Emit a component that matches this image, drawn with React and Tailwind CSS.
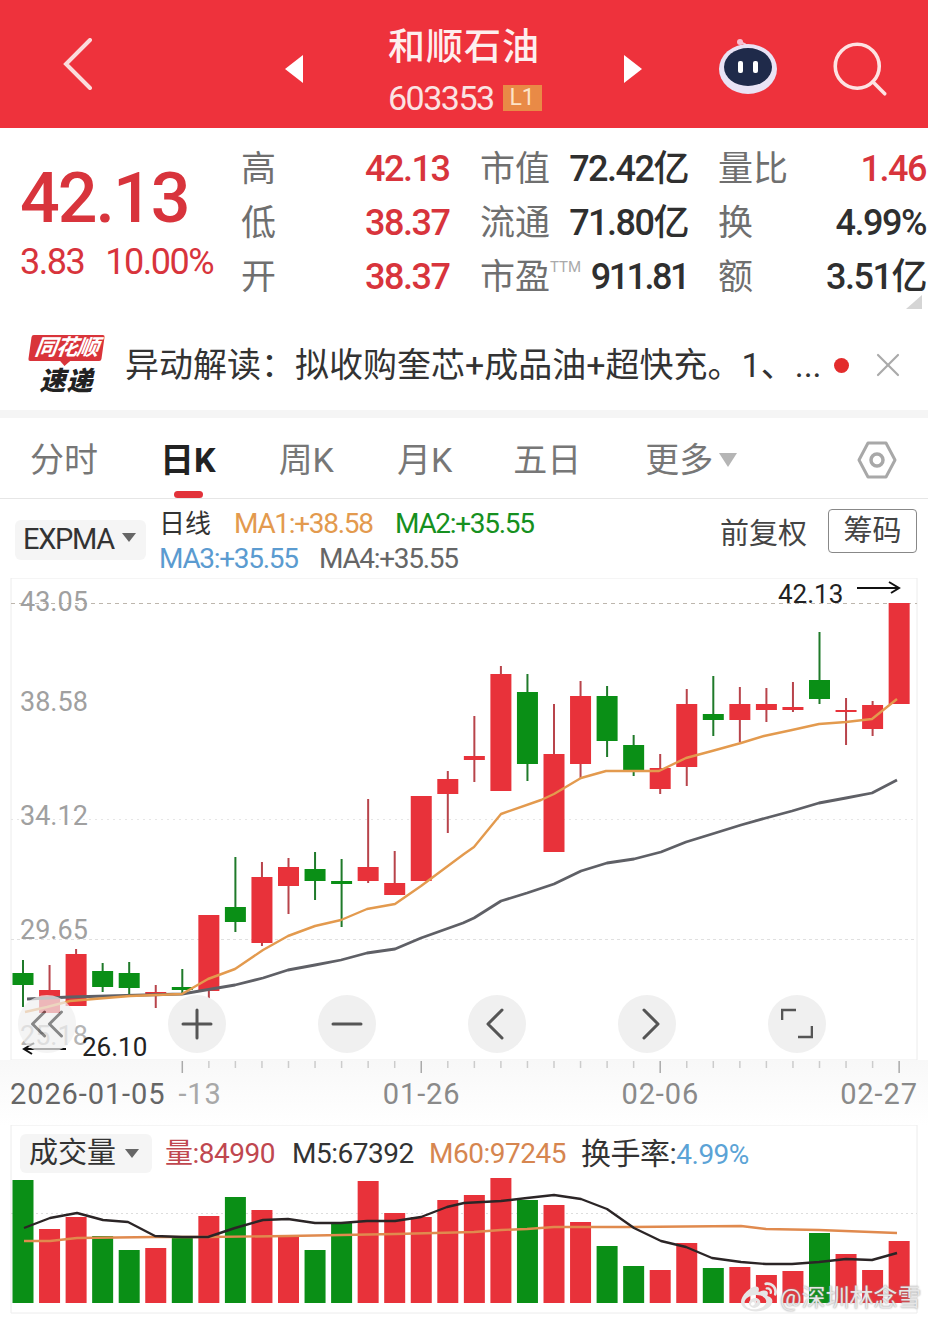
import { ChevronLeft, Search, Plus, Minus, ChevronRight, ChevronsLeft, X } from 'lucide-react'
import { FaWeibo } from 'react-icons/fa'

const UP = '#e8323a'
const DOWN = '#0a8f16'
const font = { fontFamily: 'Roboto, "Noto Sans CJK SC", sans-serif' }

const newsText = '异动解读\uFF1A拟收购奎芯+成品油+超快充。1、...'

// color, wick top, wick bottom, body top, body bottom
const candles = [
  ['d', 960, 1007, 973, 985], ['u', 965, 1013, 990, 1013], ['u', 949, 1006, 954, 1006],
  ['d', 963, 992, 971, 987], ['d', 962, 997, 973, 988], ['u', 985, 1008, 992, 995],
  ['d', 969, 994, 987, 990], ['u', 915, 1006, 915, 991], ['d', 857, 932, 907, 922],
  ['u', 862, 946, 877, 943], ['u', 858, 914, 867, 886], ['d', 852, 900, 869, 881],
  ['d', 859, 927, 881, 884], ['u', 799, 883, 867, 881], ['u', 851, 894, 883, 895],
  ['u', 796, 881, 796, 881], ['u', 771, 833, 779, 794], ['u', 716, 782, 756, 760],
  ['u', 666, 791, 674, 791], ['d', 674, 781, 692, 764], ['u', 704, 852, 754, 852],
  ['u', 681, 779, 696, 764], ['d', 686, 757, 696, 741], ['d', 735, 776, 745, 770],
  ['u', 754, 794, 768, 789], ['u', 689, 786, 704, 767], ['d', 676, 736, 714, 720],
  ['u', 687, 742, 704, 720], ['u', 688, 722, 704, 710], ['u', 682, 712, 707, 710],
  ['d', 632, 704, 680, 699], ['u', 698, 745, 710, 712], ['u', 701, 736, 705, 729],
  ['u', 603, 704, 603, 704],
]

const volumes = [
  ['d', 1180], ['u', 1229], ['u', 1217], ['d', 1236], ['d', 1250], ['u', 1248], ['d', 1238],
  ['u', 1216], ['d', 1197], ['u', 1210], ['u', 1237], ['d', 1250], ['d', 1223], ['u', 1181],
  ['u', 1213], ['u', 1217], ['u', 1200], ['u', 1195], ['u', 1178], ['d', 1200], ['u', 1205],
  ['u', 1222], ['d', 1246], ['d', 1266], ['u', 1270], ['u', 1243], ['d', 1268], ['u', 1267],
  ['u', 1275], ['u', 1271], ['d', 1233], ['u', 1254], ['u', 1270], ['u', 1241],
]

const maOrange = '25,1012 47,1007 70,1001 130,996 182,994 208,979 235,969 263,950 288,936 315,926 341,920 367,909 395,904 421,886 464,854 474,847 501,814 541,800 554,794 581,778 606,771 659,771 686,758 712,751 741,743 764,736 792,730 819,724 846,722 872,719 897,699'
const maGray = '27,999 70,997 182,994 235,985 263,978 288,970 315,965 341,960 367,953 395,949 421,938 463,923 474,918 501,901 527,893 554,884 581,871 607,863 634,859 661,852 686,842 712,834 741,825 766,818 792,811 819,803 846,798 872,793 897,780'
const volBlack = '24,1228 50,1218 77,1213 103,1220 128,1222 155,1236 182,1237 208,1237 235,1228 263,1220 288,1219 315,1223 341,1223 367,1221 395,1221 421,1217 447,1207 464,1203 501,1201 527,1198 554,1195 581,1199 607,1209 634,1228 661,1241 686,1247 712,1258 741,1262 766,1264 792,1264 819,1262 846,1259 872,1260 897,1253'
const volOrange = '24,1241 50,1241 77,1238 155,1237 208,1237 288,1236 395,1234 474,1232 501,1230 527,1229 554,1227 631,1227 741,1226 766,1229 819,1230 897,1233'

const cx = i => 23 + i * 26.55

function PriceChart() {
  return (
    <svg viewBox="0 578 928 482" className="absolute inset-0 h-full w-full">
      <path d="M11 1060V578H917V1060H11" fill="none" stroke="#ececec" strokeWidth="1" />
      <line x1="11" x2="917" y1="603.5" y2="603.5" stroke="#bdb6ad" strokeDasharray="4 4" />
      <line x1="11" x2="917" y1="819.5" y2="819.5" stroke="#e6e6e6" strokeDasharray="2 4" />
      <line x1="11" x2="917" y1="939.5" y2="939.5" stroke="#e0e0e0" strokeDasharray="3 3" />
      {candles.map(([c, wt, wb, bt, bb], i) => {
        const color = c === 'u' ? UP : DOWN
        return (
          <g key={i}>
            <rect x={cx(i) - 1} y={wt} width="2" height={wb - wt} fill={c === 'u' ? '#b8444b' : '#1f7a2a'} />
            <rect x={cx(i) - 10.5} y={bt} width="21" height={bb - bt} fill={color} />
          </g>
        )
      })}
      <polyline points={maGray} fill="none" stroke="#5f6066" strokeWidth="2.8" strokeLinejoin="round" />
      <polyline points={maOrange} fill="none" stroke="#e39a4e" strokeWidth="2.4" strokeLinejoin="round" />
    </svg>
  )
}

function VolumeChart() {
  return (
    <svg viewBox="0 1125 928 195" className="absolute inset-0 h-full w-full">
      <path d="M11 1313V1125H917V1313H11" fill="none" stroke="#ececec" strokeWidth="1" />
      <line x1="11" x2="917" y1="1213.5" y2="1213.5" stroke="#dddddd" strokeDasharray="2 3" />
      {volumes.map(([c, top], i) => (
        <rect key={i} x={cx(i) - 10.5} y={top} width="21" height={1303 - top} fill={c === 'u' ? UP : DOWN} />
      ))}
      <polyline points={volOrange} fill="none" stroke="#e08a4e" strokeWidth="2.4" strokeLinejoin="round" />
      <polyline points={volBlack} fill="none" stroke="#2b2526" strokeWidth="2.4" strokeLinejoin="round" />
    </svg>
  )
}

function Robot() {
  return (
    <svg viewBox="0 0 60 60" className="h-[60px] w-[60px]">
      <path d="M30 13C29 7 25 8 23 6" fill="none" stroke="#f4c6d6" strokeWidth="2" />
      <circle cx="22" cy="6" r="3" fill="#f7bfd2" />
      <ellipse cx="30" cy="33" rx="29" ry="25" fill="#e9e3f5" />
      <ellipse cx="30" cy="31" rx="24" ry="19" fill="#1f2a4a" />
      <rect x="20" y="25" width="5" height="12" rx="2" fill="#fff" />
      <rect x="35" y="25" width="5" height="12" rx="2" fill="#fff" />
    </svg>
  )
}

function StatRow({ label, value, name, amount, name2, amount2, amountClass, tag }) {
  return (
    <div className="flex h-[54px] items-center whitespace-nowrap text-[#6f6f6f]">
      <span className="w-[124px] text-[35px] leading-none">{label}</span>
      <span className="w-[84px] text-right text-[36px] font-medium leading-none tracking-[-1.5px] text-[#d8343c]">{value}</span>
      <span className="ml-[31px] flex w-[88px] items-start text-[35px] leading-none">
        {name}
        {tag && <sup className="mt-[8px] text-[15px] leading-none text-[#aaaaaa]">{tag}</sup>}
      </span>
      <span className={`w-[120px] text-right text-[36px] font-medium leading-none text-[#2f2f2f] ${tag ? 'tracking-[-2.5px]' : 'tracking-[-1.5px]'}`}>{amount}</span>
      <span className="ml-[30px] w-[70px] text-[35px] leading-none">{name2}</span>
      <span className={`w-[138px] text-right text-[36px] font-medium leading-none tracking-[-1.5px] ${amountClass}`}>{amount2}</span>
    </div>
  )
}

function Tab({ label, active, className }) {
  return (
    <span className={`text-[34px] leading-none ${active ? 'font-bold text-[#222222]' : 'text-[#777777]'} ${className}`}>
      {label}
    </span>
  )
}

function RoundButton({ children, className = '' }) {
  return (
    <div className={`flex h-[58px] w-[58px] items-center justify-center rounded-full bg-[#f0f0f0] text-[#555555] ${className}`}>
      {children}
    </div>
  )
}

function Ticks() {
  return (
    <svg viewBox="0 1060 928 14" className="absolute left-0 top-0 h-[14px] w-full">
      {candles.map((_, i) => {
        if (i < 6) return null
        const major = i === 6 || i === 15 || i === 24 || i === 33
        return <rect key={i} x={cx(i) - 0.75} y="1061" width="1.5" height={major ? 12 : 7} fill={major ? '#aaaaaa' : '#cccccc'} />
      })}
    </svg>
  )
}

export default function App() {
  return (
    <div className="h-[1320px] w-[928px] overflow-hidden bg-white" style={font}>
      {/* header */}
      <div className="relative flex h-[128px] items-center bg-[#ee323c] pt-[12px] text-white">
        <svg viewBox="0 0 30 52" className="ml-[63px] mt-[-12px] h-[52px] w-[30px]" fill="none" stroke="#fbdcdc" strokeWidth="4" strokeLinecap="round">
          <path d="M27 2L3 26L27 50" />
        </svg>
        <div className="ml-[192px] mt-[-3px] h-0 w-0 border-y-[14px] border-r-[18px] border-y-transparent border-r-white" />
        <div className="ml-[85px] flex w-[152px] flex-col items-start">
          <span className="text-[37px] font-medium leading-[44px] tracking-[1px] text-[#fdeeee]">和顺石油</span>
          <div className="mt-[11px] flex items-center">
            <span className="text-[34px] leading-[34px] tracking-[-1.5px] text-[#fbe3e3]">603353</span>
            <span className="ml-[9px] flex h-[26px] w-[39px] items-center justify-center bg-[#e98a46] text-[23px] leading-none text-[#fde3c8]">L1</span>
          </div>
        </div>
        <div className="ml-[84px] mt-[-3px] h-0 w-0 border-y-[14px] border-l-[18px] border-y-transparent border-l-white" />
        <div className="ml-[76px] mt-[-8px]"><Robot /></div>
        <Search className="ml-[49px] mt-[-3px] h-[66px] w-[66px]" strokeWidth={1.3} color="#fde3e3" />
      </div>

      {/* quote */}
      <div className="flex h-[202px] pt-[14px]">
        <div className="w-[241px] shrink-0 pl-[20px] pt-[21px] text-[#d8343c]">
          <div className="text-[70px] font-medium leading-[70px] tracking-[-2px]">42.13</div>
          <div className="mt-[11px] flex text-[36px] leading-none tracking-[-1.5px]">
            <span>3.83</span>
            <span className="ml-[21px]">10.00%</span>
          </div>
        </div>
        <div className="relative w-[687px]">
          <StatRow label="高" value="42.13" name="市值" amount="72.42亿" name2="量比" amount2="1.46" amountClass="text-[#d8343c]" />
          <StatRow label="低" value="38.37" name="流通" amount="71.80亿" name2="换" amount2="4.99%" amountClass="text-[#2f2f2f]" />
          <StatRow label="开" value="38.37" name="市盈" tag="TTM" amount="911.81" name2="额" amount2="3.51亿" amountClass="text-[#2f2f2f]" />
          <div className="absolute right-[6px] top-[153px] h-0 w-0 border-b-[14px] border-l-[16px] border-b-[#d5d5d5] border-l-transparent" />
        </div>
      </div>

      {/* news */}
      <div className="flex h-[80px] items-center pb-[10px]">
        <div className="ml-[30px] flex w-[73px] shrink-0 flex-col items-center">
          <div className="relative flex h-[26px] w-[73px] skew-x-[-8deg] items-center justify-center rounded-[2px] bg-[#d9343a] text-[22px] font-bold italic leading-none tracking-[-1px] text-white">
            同花顺
            <div className="absolute left-[32px] top-[26px] h-0 w-0 border-x-[5px] border-t-[5px] border-x-transparent border-t-[#d9343a]" />
          </div>
          <div className="mt-[6px] text-[26px] font-black italic leading-[28px] tracking-[1px] text-[#222222]">速递</div>
        </div>
        <div className="ml-[22px] w-[707px] shrink-0 whitespace-nowrap text-[34px] leading-none text-[#333333]">{newsText}</div>
        <div className="ml-[2px] h-[15px] w-[15px] shrink-0 rounded-full bg-[#e32c2c]" />
        <X className="ml-[19px] h-[40px] w-[40px] shrink-0" strokeWidth={1.3} color="#aaaaaa" />
      </div>
      <div className="h-[8px] bg-[#f5f5f5]" />

      {/* tabs */}
      <div className="relative flex h-[81px] items-center border-b border-[#e6e6e6] pt-[3px]">
        <Tab label="分时" className="ml-[30px]" />
        <Tab label="日K" active className="ml-[62px]" />
        <Tab label="周K" className="ml-[63px]" />
        <Tab label="月K" className="ml-[63px]" />
        <Tab label="五日" className="ml-[61px]" />
        <Tab label="更多" className="ml-[64px]" />
        <div className="ml-[6px] h-0 w-0 border-x-[9px] border-t-[14px] border-x-transparent border-t-[#b5b5b5]" />
        <svg viewBox="0 0 40 40" className="ml-[120px] h-[40px] w-[40px]" fill="none" stroke="#a8a8a8">
          <path d="M11 3H29L38 20L29 37H11L2 20Z" strokeWidth="3" strokeLinejoin="round" />
          <circle cx="20" cy="20" r="6" strokeWidth="3.5" />
        </svg>
        <div className="absolute bottom-0 left-[174px] h-[7px] w-[29px] rounded-full bg-[#e2323a]" />
      </div>

      {/* indicator row */}
      <div className="flex h-[79px] items-center whitespace-nowrap text-[28px] leading-none tracking-[-1.3px]">
        <div className="ml-[15px] mt-[2px] flex h-[40px] w-[131px] shrink-0 items-center rounded-[6px] bg-[#f5f5f5] pl-[8px] text-[29px] text-[#333333]">
          EXPMA
          <div className="ml-[8px] mt-[-4px] h-0 w-0 border-x-[7px] border-t-[9px] border-x-transparent border-t-[#666666]" />
        </div>
        <div className="ml-[13px] mt-[5px] flex flex-col gap-[7px]">
          <div className="flex items-center">
            <span className="w-[75px] text-[26px] tracking-normal text-[#333333]">日线</span>
            <span className="w-[161px] text-[#e39a4e]">MA1:+38.58</span>
            <span className="text-[#169020]">MA2:+35.55</span>
          </div>
          <div className="flex items-center">
            <span className="w-[160px] text-[#5b9bd0]">MA3:+35.55</span>
            <span className="text-[#666666]">MA4:+35.55</span>
          </div>
        </div>
        <span className="ml-auto mt-[-9px] text-[29px] tracking-normal text-[#444444]">前复权</span>
        <div className="ml-[21px] mr-[11px] mt-[-15px] flex h-[44px] w-[89px] shrink-0 items-center justify-center rounded-[4px] border border-[#888888] text-[29px] tracking-normal text-[#444444]">筹码</div>
      </div>

      {/* price chart */}
      <div className="relative h-[482px]">
        <PriceChart />
        <span className="absolute left-[20px] top-[10px] text-[27px] leading-[28px] text-[#a0a0a0]">43.05</span>
        <span className="absolute left-[20px] top-[110px] text-[27px] leading-[28px] text-[#a0a0a0]">38.58</span>
        <span className="absolute left-[20px] top-[224px] text-[27px] leading-[28px] text-[#a0a0a0]">34.12</span>
        <span className="absolute left-[20px] top-[338px] text-[27px] leading-[28px] text-[#a0a0a0]">29.65</span>
        <span className="absolute left-[20px] top-[444px] text-[27px] leading-[28px] text-[#b5b5b5]">25.18</span>
        <span className="absolute left-[778px] top-[2px] text-[26px] leading-[28px] text-[#222222]">42.13</span>
        <svg viewBox="0 0 44 14" className="absolute left-[857px] top-[3px] h-[14px] w-[44px]" fill="none" stroke="#111111" strokeWidth="2">
          <path d="M0 7H42M32 1L42 7L34 12" />
        </svg>
        <span className="absolute left-[82px] top-[455px] text-[26px] leading-[28px] text-[#222222]">26.10</span>
        <svg viewBox="0 0 44 14" className="absolute left-[22px] top-[464px] h-[14px] w-[44px]" fill="none" stroke="#111111" strokeWidth="2">
          <path d="M44 7H2M12 1L2 7L10 12" />
        </svg>
        <div className="absolute left-[18px] top-[417px] flex gap-[92px]">
          <RoundButton className="opacity-70"><ChevronsLeft size={58} strokeWidth={1.2} className="shrink-0" /></RoundButton>
          <RoundButton><Plus size={48} strokeWidth={1.5} className="shrink-0" /></RoundButton>
          <RoundButton><Minus size={48} strokeWidth={1.5} className="shrink-0" /></RoundButton>
          <RoundButton><ChevronLeft size={56} strokeWidth={1.3} className="ml-[-4px] shrink-0" /></RoundButton>
          <RoundButton><ChevronRight size={56} strokeWidth={1.3} className="ml-[7px] shrink-0" /></RoundButton>
          <RoundButton>
            <svg viewBox="0 0 32 32" className="h-[32px] w-[32px]" fill="none" stroke="#555555" strokeWidth="2.6">
              <path d="M1 12V2H15M31 18V29H17" />
            </svg>
          </RoundButton>
        </div>
      </div>

      {/* date axis */}
      <div className="relative h-[65px] bg-gradient-to-b from-[#f8f8f8] to-white">
        <Ticks />
        <div className="flex pt-[19px] text-[29px] leading-[30px] tracking-[0.9px] text-[#8a8a8a]">
          <span className="ml-[10px] text-[#666666]">2026-01-05</span>
          <span className="ml-[13px] text-[#a8a8a8]">-13</span>
          <span className="ml-[161px]">01-26</span>
          <span className="ml-[161px]">02-06</span>
          <span className="ml-[141px]">02-27</span>
        </div>
      </div>

      {/* volume chart */}
      <div className="relative h-[195px]">
        <VolumeChart />
        <div className="absolute left-0 top-[9px] flex items-center whitespace-nowrap text-[28px] leading-none tracking-[-0.5px]">
          <div className="ml-[20px] flex h-[39px] w-[132px] items-center rounded-[6px] bg-[#f5f5f5] pl-[9px] text-[29px] tracking-normal text-[#333333]">
            成交量
            <div className="ml-[9px] h-0 w-0 border-x-[7px] border-t-[9px] border-x-transparent border-t-[#666666]" />
          </div>
          <span className="ml-[13px] w-[127px] text-[#c0474f]">量:84990</span>
          <span className="w-[137px] text-[#333333]">M5:67392</span>
          <span className="w-[152px] text-[#d68650]">M60:97245</span>
          <span className="text-[30px] text-[#333333]">换手率:<span className="text-[28px] text-[#5ba3d6]">4.99%</span></span>
        </div>
        <div className="absolute left-[741px] top-[155px] flex items-center text-[#e6e6e6] [text-shadow:0_0_2px_#8a8a8a]">
          <FaWeibo size={36} className="shrink-0" />
          <span className="ml-[3px] whitespace-nowrap text-[24px] leading-none">@深圳林念雪</span>
        </div>
      </div>
    </div>
  )
}
